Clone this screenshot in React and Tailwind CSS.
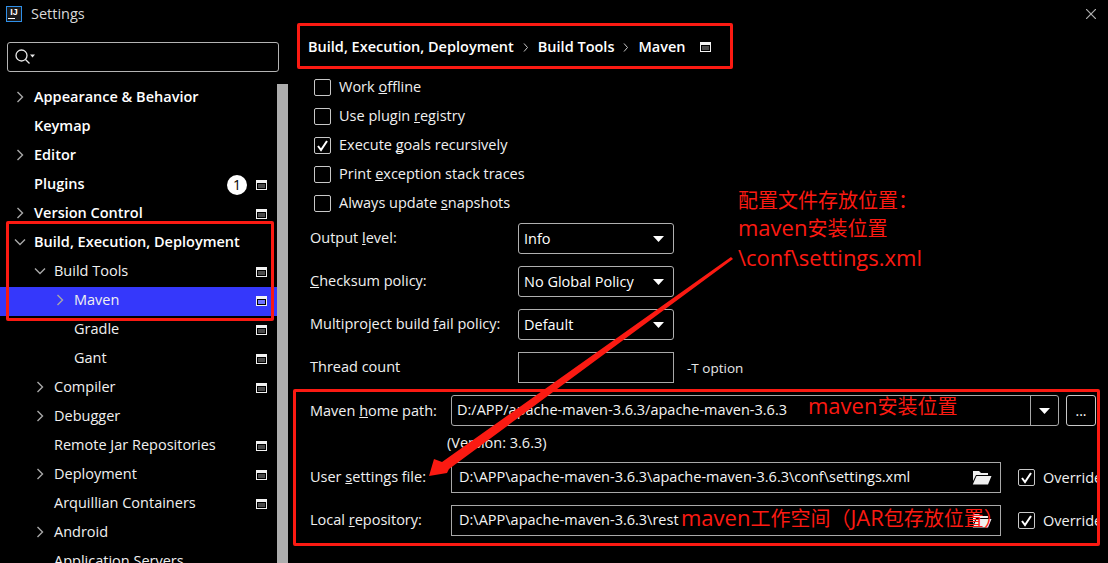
const RED = "#fb1a12";

function Chevron({ open }) {
  return (
    <svg width="12" height="12" viewBox="0 0 12 12" fill="none" stroke="#a8a8a8" strokeWidth="1.4">
      {open ? <polyline points="1,3.5 6,8.5 11,3.5" /> : <polyline points="3.5,1 8.5,6 3.5,11" />}
    </svg>
  );
}

function ProjectIcon({ inner = "#4a4a4a" }) {
  return (
    <svg width="11" height="10" viewBox="0 0 11 10" className="shrink-0">
      <rect x="0" y="0" width="11" height="10" fill="#f2f2f2" />
      <rect x="1" y="3" width="9" height="6" fill="#000" />
      <rect x="2" y="4" width="7" height="4" fill={inner} />
    </svg>
  );
}

const rows = [
  { t: "Appearance & Behavior", l: 0, c: "r", b: true },
  { t: "Keymap", l: 0, b: true },
  { t: "Editor", l: 0, c: "r", b: true },
  { t: "Plugins", l: 0, b: true, p: true, badge: true },
  { t: "Version Control", l: 0, c: "r", b: true, p: true },
  { t: "Build, Execution, Deployment", l: 0, c: "d", b: true },
  { t: "Build Tools", l: 1, c: "d", p: true },
  { t: "Maven", l: 2, c: "r", p: true, sel: true },
  { t: "Gradle", l: 2, p: true },
  { t: "Gant", l: 2, p: true },
  { t: "Compiler", l: 1, c: "r", p: true },
  { t: "Debugger", l: 1, c: "r" },
  { t: "Remote Jar Repositories", l: 1, p: true },
  { t: "Deployment", l: 1, c: "r", p: true },
  { t: "Arquillian Containers", l: 1, p: true },
  { t: "Android", l: 1, c: "r" },
  { t: "Application Servers", l: 1 },
];

const pad = ["pl-[34px]", "pl-[54px]", "pl-[74px]"];
const chev = ["left-[14px]", "left-[34px]", "left-[54px]"];

function TreeRow({ r }) {
  return (
    <div className={`relative h-[29px] shrink-0 flex items-center pr-[10px] ${pad[r.l]} ${r.sel ? "bg-[#3538fb]" : ""}`}>
      {r.c && (
        <span className={`absolute top-[7px] ${chev[r.l]}`}>
          <Chevron open={r.c === "d"} />
        </span>
      )}
      <span className={`flex-1 -mt-[4px] whitespace-nowrap ${r.b ? "font-semibold text-white" : "text-[#f0f0f0]"}`}>{r.t}</span>
      {r.badge && (
        <span className="w-[20px] h-[20px] -mt-[2px] mr-[9px] rounded-full bg-white text-black text-[14px] leading-[20px] text-center">1</span>
      )}
      {r.p && <span className="-mt-[2px] flex"><ProjectIcon inner={r.sel ? "#6f72ff" : "#4a4a4a"} /></span>}
    </div>
  );
}

function Check({ on }) {
  return (
    <span className="w-[17px] h-[17px] shrink-0 rounded-[2px] border border-[#c8c8c8] flex items-center justify-center">
      {on && (
        <svg width="13" height="13" viewBox="0 0 13 13" fill="none" stroke="#fff" strokeWidth="2">
          <polyline points="2,7 5,11 11,2" />
        </svg>
      )}
    </span>
  );
}

function CheckRow({ on, children }) {
  return (
    <div className="h-[29px] flex items-center gap-[8px] ml-[4px]">
      <Check on={on} />
      <span className="text-[#f0f0f0] -mt-[1px] whitespace-nowrap">{children}</span>
    </div>
  );
}

function Caret() {
  return (
    <svg width="11" height="6" viewBox="0 0 11 6" className="shrink-0">
      <polygon points="0,0 11,0 5.5,6" fill="#fff" />
    </svg>
  );
}

function SelectRow({ label, value }) {
  return (
    <div className="flex items-center h-[31px] mb-[12px]">
      <span className="w-[208px] shrink-0 text-[#f0f0f0] -mt-[2px] whitespace-nowrap">{label}</span>
      <div className="w-[156px] h-[31px] rounded-[3px] border border-[#b0b0b0] flex items-center justify-between pl-[5px] pr-[9px] text-white">
        <span>{value}</span>
        <Caret />
      </div>
    </div>
  );
}

function Folder() {
  return (
    <svg width="20" height="15" viewBox="0 0 20 15" className="shrink-0">
      <path d="M1 1 H7 L9 3 H16 V5 H4 L1 11 Z" fill="#efefef" />
      <path d="M4.5 6 H19.5 L16 14.5 H0.8 Z" fill="#efefef" />
    </svg>
  );
}

function PathRow({ label, value }) {
  return (
    <div className="flex items-center h-[31px] mb-[12px]">
      <span className="w-[141px] shrink-0 text-[#f0f0f0] whitespace-nowrap -mt-[1px]">{label}</span>
      <div className="w-[550px] h-[31px] border border-[#a8a8a8] flex items-center justify-between pl-[7px] pr-[8px] text-[#f4f4f4] whitespace-nowrap">
        <span className="-mt-[1px]">{value}</span>
        <Folder />
      </div>
      <span className="ml-[17px]"><Check on /></span>
      <span className="ml-[8px] w-[54px] overflow-hidden text-[#f0f0f0] whitespace-nowrap">Override</span>
    </div>
  );
}

export default function App() {
  return (
    <div
      className="relative w-[1108px] h-[563px] overflow-hidden bg-black flex flex-col text-[14.5px] leading-[20px] [text-decoration-skip-ink:none]"
      style={{ fontFamily: '"Open Sans", "Noto Sans CJK SC", sans-serif' }}
    >
      <div className="h-[28px] shrink-0 flex items-center pl-[6px] pr-[12px]">
        <span className="w-[16px] h-[16px] border border-[#2f8fe8] bg-[#1a1a1a] flex flex-col items-center justify-start text-[9px] leading-[9px] font-bold text-white pt-[1px]" style={{ fontFamily: '"Liberation Sans", sans-serif' }}>
          IJ
          <span className="w-[7px] h-px bg-white mt-[1px] self-start ml-[1px]" />
        </span>
        <span className="ml-[9px] flex-1 text-[#d8d8d8]">Settings</span>
        <svg width="10" height="10" viewBox="0 0 10 10" stroke="#b0b0b0" strokeWidth="1.2">
          <line x1="0" y1="0" x2="10" y2="10" />
          <line x1="10" y1="0" x2="0" y2="10" />
        </svg>
      </div>

      <div className="flex flex-1 min-h-0">
        <div className="w-[288px] shrink-0 flex flex-col">
          <div className="mt-[14px] ml-[7px] w-[272px] h-[30px] shrink-0 rounded-[3px] border border-[#b4b4b4] flex items-center pl-[7px]">
            <svg width="22" height="16" viewBox="0 0 22 16" fill="none" stroke="#e8e8e8" strokeWidth="1.3">
              <circle cx="6.5" cy="6.5" r="5.5" />
              <line x1="10.5" y1="10.5" x2="14.5" y2="14.5" />
              <polygon points="15,5.5 20,5.5 17.5,8.5" fill="#e8e8e8" stroke="none" />
            </svg>
          </div>
          <div className="flex-1 min-h-0 flex mt-[12px] overflow-hidden">
            <div className="w-[277px] flex flex-col shrink-0">
              {rows.map((r) => (
                <TreeRow key={r.t} r={r} />
              ))}
            </div>
            <div className="w-[11px] bg-[#adadad]" />
          </div>
        </div>

        <div className="flex-1 min-w-0 pl-[22px] flex flex-col">
          <div className="h-[38px] shrink-0 flex items-center -ml-[2px] font-semibold text-white whitespace-nowrap">
            <span>Build, Execution, Deployment</span>
            <svg width="6" height="9" viewBox="0 0 6 9" fill="none" stroke="#c8c8c8" className="mx-[9px]"><polyline points="1,0.5 4.5,4.5 1,8.5" /></svg>
            <span>Build Tools</span>
            <svg width="6" height="9" viewBox="0 0 6 9" fill="none" stroke="#c8c8c8" className="mx-[9px]"><polyline points="1,0.5 4.5,4.5 1,8.5" /></svg>
            <span>Maven</span>
            <span className="ml-[14px] flex"><ProjectIcon /></span>
          </div>
          <div className="mt-[7px] mb-[5px] flex flex-col">
            <CheckRow>Work <u>o</u>ffline</CheckRow>
            <CheckRow>Use plugin <u>r</u>egistry</CheckRow>
            <CheckRow on>Execute <u>g</u>oals recursively</CheckRow>
            <CheckRow>Print <u>e</u>xception stack traces</CheckRow>
            <CheckRow>Always update <u>s</u>napshots</CheckRow>
          </div>

          <SelectRow label={<>Output <u>l</u>evel:</>} value="Info" />
          <SelectRow label={<><u>C</u>hecksum policy:</>} value="No Global Policy" />
          <SelectRow label={<>Multiproject build <u>f</u>ail policy:</>} value="Default" />
          <div className="flex items-center h-[31px] mb-[12px]">
            <span className="w-[208px] shrink-0 text-[#f0f0f0] -mt-[2px]">Thread count</span>
            <div className="w-[156px] h-[31px] border border-[#a8a8a8]" />
            <span className="ml-[13px] text-[13.5px] text-[#e8e8e8]">-T option</span>
          </div>

          <div className="flex items-center h-[31px]">
            <span className="w-[141px] shrink-0 text-[#f0f0f0] whitespace-nowrap">Maven <u>h</u>ome path:</span>
            <div className="w-[608px] h-[31px] rounded-[3px] border border-[#a8a8a8] flex items-center text-[#f4f4f4] whitespace-nowrap">
              <span className="flex-1 pl-[5px] -mt-[2px]">D:/APP/apache-maven-3.6.3/apache-maven-3.6.3</span>
              <span className="w-[28px] h-full border-l border-[#a8a8a8] flex items-center justify-center"><Caret /></span>
            </div>
            <button className="ml-[7px] w-[30px] h-[31px] rounded-[3px] border border-[#c8c8c8] text-white text-[14px] leading-[24px]">...</button>
          </div>
          <div className="h-[36px] flex items-center pl-[137px] text-[#f0f0f0]"><span className="-mt-[2px]">(Version: 3.6.3)</span></div>
          <PathRow label={<>User <u>s</u>ettings file:</>} value="D:\APP\apache-maven-3.6.3\apache-maven-3.6.3\conf\settings.xml" />
          <PathRow label={<>Local <u>r</u>epository:</>} value="D:\APP\apache-maven-3.6.3\rest" />
        </div>
      </div>

      {/* Red annotations laid over the screenshot */}
      <div className="absolute left-[297px] top-[23px] w-[436px] h-[46px] rounded-[2px] border-[3px] border-[#fb1a12]" />
      <div className="absolute left-[6px] top-[221px] w-[268px] h-[100px] rounded-[2px] border-[3px] border-[#fb1a12]" />
      <div className="absolute left-[293px] top-[389px] w-[807px] h-[157px] rounded-[2px] border-[3px] border-[#fb1a12]" />

      <svg className="absolute left-0 top-0 pointer-events-none" width="1108" height="563" viewBox="0 0 1108 563">
        <polygon points="731,257 733,259 449,469 447,473 429,476 434,459 442,462" fill={RED} />
      </svg>

      <div className="absolute left-[738px] top-[187px] text-[20px] text-[#fb1a12] whitespace-nowrap flex flex-col">
        <span className="h-[28px] leading-[28px]">配置文件存放位置：</span>
        <span className="h-[28px] leading-[28px]"><span className="text-[22px] leading-[20px]">maven</span>安装位置</span>
        <span className="h-[28px] text-[22px] leading-[28px]">\conf\settings.xml</span>
      </div>
      <div className="absolute left-[808px] top-[393px] h-[28px] leading-[28px] text-[20px] text-[#fb1a12] whitespace-nowrap"><span className="text-[22px] leading-[20px]">maven</span>安装位置</div>
      <div className="absolute left-[681px] top-[505px] h-[28px] leading-[28px] text-[20px] text-[#fb1a12] whitespace-nowrap"><span className="text-[22px] leading-[20px]">maven</span>工作空间（<span className="text-[22px] leading-[20px]">JAR</span>包存放位置）</div>
    </div>
  );
}
